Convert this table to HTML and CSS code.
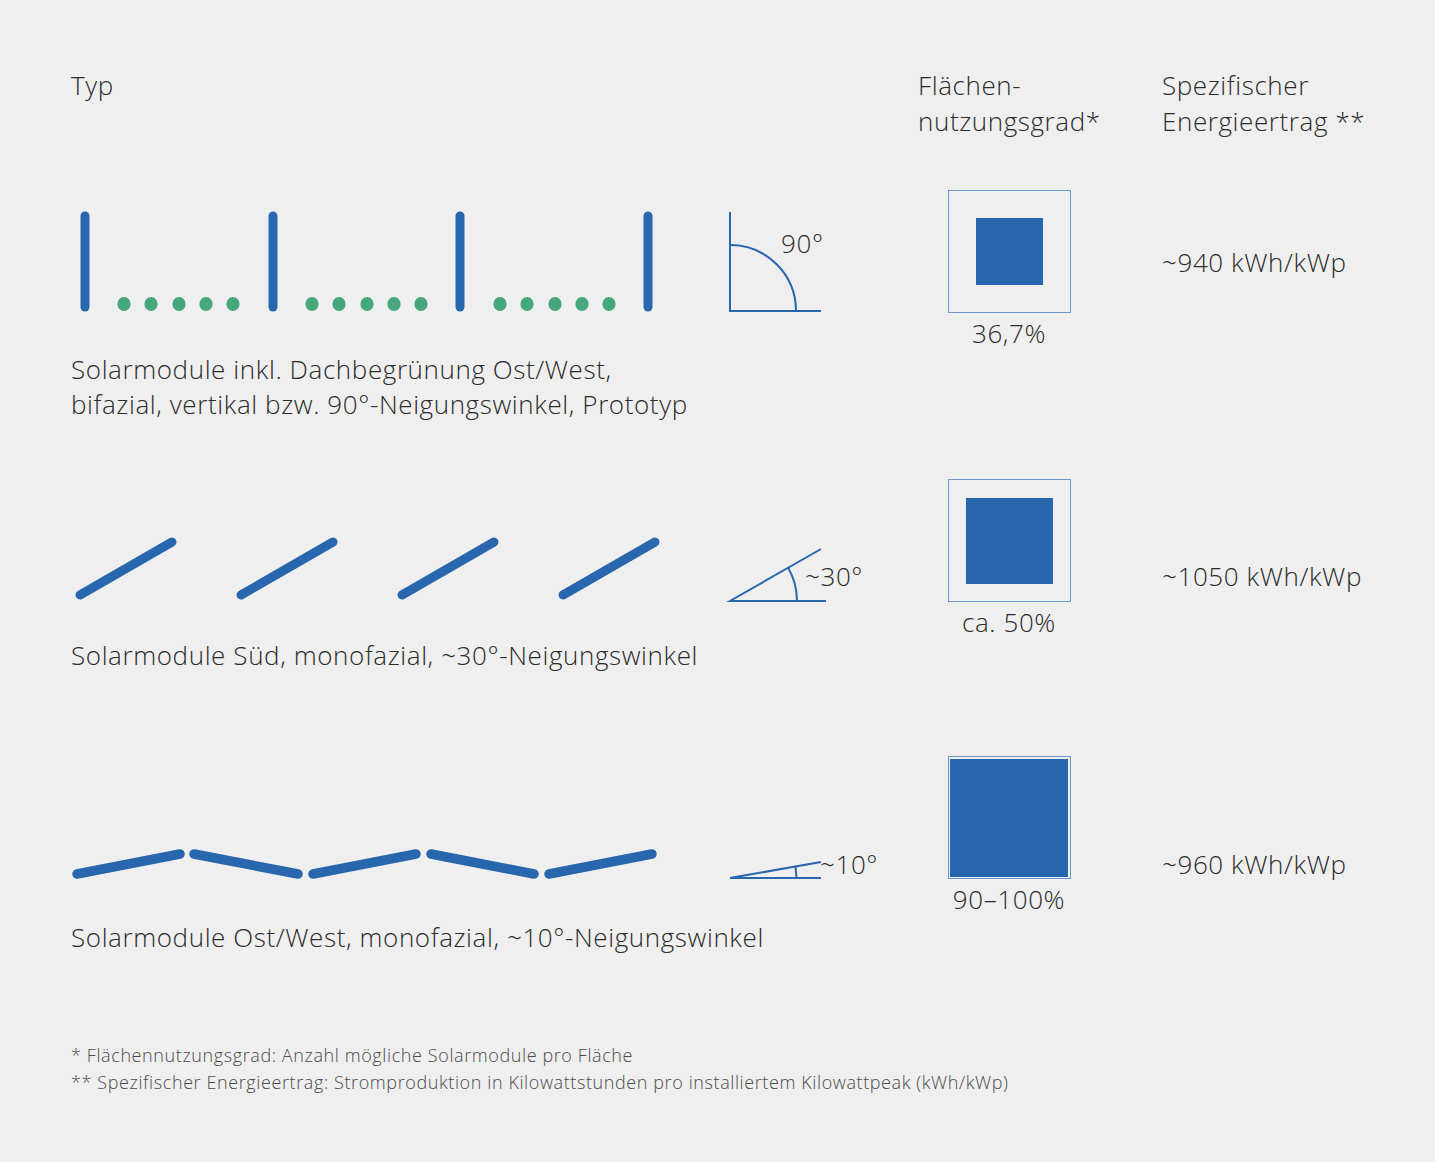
FILE: index.html
```html
<!DOCTYPE html>
<html lang="de">
<head>
<meta charset="utf-8">
<title>Solarmodule Vergleich</title>
<link rel="stylesheet" href="styles.css">
</head>
<body>
<main class="page">
  <div class="table">
    <div class="head">Typ</div>
    <div class="head">Flächen-<br>nutzungsgrad*</div>
    <div class="head">Spezifischer<br>Energieertrag **</div>

    <!-- Row 1 -->
    <div class="type type-1">
      <svg class="diagram" width="840" height="130" viewBox="71 190 840 130">
        <g stroke="#2866ae" stroke-width="9" stroke-linecap="round">
          <line x1="85" y1="216" x2="85" y2="307"/>
          <line x1="273" y1="216" x2="273" y2="307"/>
          <line x1="460" y1="216" x2="460" y2="307"/>
          <line x1="648" y1="216" x2="648" y2="307"/>
        </g>
        <g fill="#47a77c">
          <ellipse cx="124" cy="304" rx="6.6" ry="7"/>
          <ellipse cx="151" cy="304" rx="6.6" ry="7"/>
          <ellipse cx="179" cy="304" rx="6.6" ry="7"/>
          <ellipse cx="206" cy="304" rx="6.6" ry="7"/>
          <ellipse cx="233" cy="304" rx="6.6" ry="7"/>
          <ellipse cx="312" cy="304" rx="6.6" ry="7"/>
          <ellipse cx="339" cy="304" rx="6.6" ry="7"/>
          <ellipse cx="367" cy="304" rx="6.6" ry="7"/>
          <ellipse cx="394" cy="304" rx="6.6" ry="7"/>
          <ellipse cx="421" cy="304" rx="6.6" ry="7"/>
          <ellipse cx="500" cy="304" rx="6.6" ry="7"/>
          <ellipse cx="527" cy="304" rx="6.6" ry="7"/>
          <ellipse cx="555" cy="304" rx="6.6" ry="7"/>
          <ellipse cx="582" cy="304" rx="6.6" ry="7"/>
          <ellipse cx="609" cy="304" rx="6.6" ry="7"/>
        </g>
        <g fill="none" stroke="#2866ae" stroke-width="2">
          <path d="M730 212 V311 H821"/>
          <path d="M730 245 A66 66 0 0 1 796 311"/>
        </g>
        <text class="angle" x="781" y="253">90°</text>
      </svg>
      <p class="desc">Solarmodule inkl. Dachbegrünung Ost/West,<br>bifazial, vertikal bzw. 90°-Neigungswinkel, Prototyp</p>
    </div>
    <div class="usage">
      <div class="box"><div class="fill fill-1"></div></div>
      <div class="pct">36,7%</div>
    </div>
    <div class="yield yield-1">~940 kWh/kWp</div>

    <!-- Row 2 -->
    <div class="type type-2">
      <svg class="diagram" width="840" height="140" viewBox="71 480 840 140">
        <g stroke="#2866ae" stroke-width="9" stroke-linecap="round">
          <line x1="80" y1="596" x2="172" y2="543"/>
          <line x1="241" y1="596" x2="333" y2="543"/>
          <line x1="402" y1="596" x2="494" y2="543"/>
          <line x1="563" y1="596" x2="655" y2="543"/>
        </g>
        <g fill="none" stroke="#2866ae" stroke-width="2">
          <path d="M821 550 L730 602 H826"/>
          <path d="M788 568.5 A67 67 0 0 1 797 602"/>
        </g>
        <text class="angle" x="805" y="587">~30°</text>
      </svg>
      <p class="desc">Solarmodule Süd, monofazial, ~30°-Neigungswinkel</p>
    </div>
    <div class="usage">
      <div class="box"><div class="fill fill-2"></div></div>
      <div class="pct">ca. 50%</div>
    </div>
    <div class="yield yield-2">~1050 kWh/kWp</div>

    <!-- Row 3 -->
    <div class="type type-3">
      <svg class="diagram" width="840" height="162" viewBox="71 758 840 162">
        <g stroke="#2866ae" stroke-width="9.5" stroke-linecap="round">
          <line x1="77" y1="876" x2="180" y2="856"/>
          <line x1="194" y1="856" x2="298" y2="876"/>
          <line x1="313" y1="876" x2="416" y2="856"/>
          <line x1="431" y1="856" x2="534" y2="876"/>
          <line x1="549" y1="876" x2="652" y2="856"/>
        </g>
        <g fill="none" stroke="#2866ae" stroke-width="2">
          <path d="M821 864 L730 880 H821"/>
          <path d="M795.5 868.5 L796.5 880"/>
        </g>
        <text class="angle" x="820" y="876">~10°</text>
      </svg>
      <p class="desc">Solarmodule Ost/West, monofazial, ~10°-Neigungswinkel</p>
    </div>
    <div class="usage">
      <div class="box box-full"><div class="fill fill-3"></div></div>
      <div class="pct">90–100%</div>
    </div>
    <div class="yield yield-3">~960 kWh/kWp</div>
  </div>

  <footer class="notes">
    <p>* Flächennutzungsgrad: Anzahl mögliche Solarmodule pro Fläche</p>
    <p>** Spezifischer Energieertrag: Stromproduktion in Kilowattstunden pro installiertem Kilowattpeak (kWh/kWp)</p>
  </footer>
</main>
</body>
</html>
```

FILE: styles.css
```css
html, body {
  margin: 0;
  padding: 0;
  background: #efefef;
}

body {
  font-family: "Open Sans", Lato, "Liberation Sans", sans-serif;
  font-weight: 300;
  color: #2b2b2b;
  letter-spacing: 0.6px;
  width: 1435px;
  height: 1162px;
  overflow: hidden;
}

.page {
  padding: 67px 0 0 71px;
}

.table {
  display: grid;
  grid-template-columns: 847px 244px 1fr;
  align-items: start;
}

.head {
  font-size: 26px;
  line-height: 36px;
  height: 123px;
}

.type {
  display: flex;
  flex-direction: column;
}

.diagram {
  display: block;
  overflow: visible;
}

.angle {
  font-family: "Open Sans", Lato, "Liberation Sans", sans-serif;
  font-weight: 300;
  font-size: 26px;
  letter-spacing: 0.6px;
  fill: #2b2b2b;
}

.desc {
  margin: 0;
  font-size: 26px;
  line-height: 35px;
}

.type-1 .desc { margin-top: 32px; }
.type-2 .desc { margin-top: 19px; }
.type-3 .desc { margin-top: 2px; }

.type-1 { margin-bottom: 57px; }
.type-2 { margin-bottom: 83px; }
.type-3 { margin-bottom: 87px; }

.usage {
  width: 182px;
  display: flex;
  flex-direction: column;
  align-items: center;
}

.box {
  width: 123px;
  height: 123px;
  box-sizing: border-box;
  border: 1.5px solid #6f95cb;
  display: flex;
  align-items: center;
  justify-content: center;
}

.box-full {
  padding: 1.5px;
  align-items: stretch;
  justify-content: stretch;
}

.fill {
  background: #2866ae;
}

.fill-1 { width: 67px; height: 67px; }
.fill-2 { width: 87px; height: 86px; }
.fill-3 { flex: 1; }

.pct {
  font-size: 26px;
  line-height: 30px;
  margin-top: 5px;
}

.yield {
  font-size: 26px;
  line-height: 35px;
}

.yield-1 { margin-top: 55px; }
.yield-2 { margin-top: 80px; }
.yield-3 { margin-top: 91px; }

.notes {
  font-size: 18px;
  line-height: 27px;
  color: #4a4a4a;
}

.notes p {
  margin: 0;
}
```
